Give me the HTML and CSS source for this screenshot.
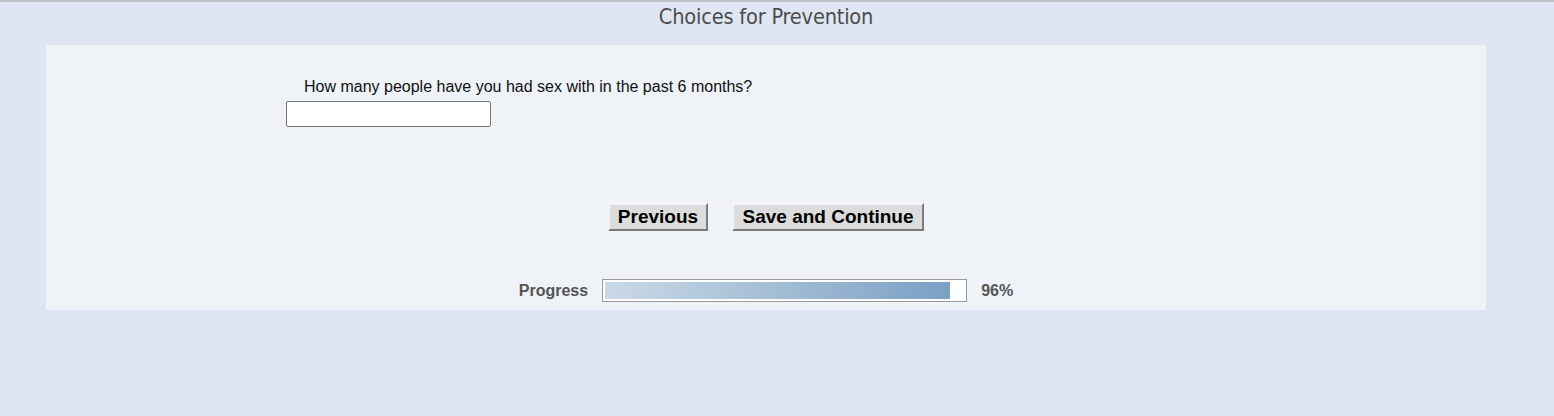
FILE: index.html
```html
<!DOCTYPE html>
<html lang="en">
<head>
	<meta charset="UTF-8">
	<title>Choices for Prevention</title>
	<link rel="stylesheet" href="styles.css">
</head>
<body>
	<div class="page">
		<h1 class="title">Choices for Prevention</h1>
		<div class="panel">
			<div class="question">
				<label for="partners">How many people have you had sex with in the past 6 months?</label>
				<input type="text" id="partners" class="answer" autocomplete="off">
			</div>
			<div class="buttons">
				<button type="button" class="btn">Previous</button>
				<button type="button" class="btn">Save and Continue</button>
			</div>
			<div class="progress">
				<span class="progress-label">Progress</span>
				<div class="bar"><div class="fill" style="width:96%"></div></div>
				<span class="progress-value">96%</span>
			</div>
		</div>
	</div>
</body>
</html>
```

FILE: styles.css
```css
html,body{margin:0;padding:0;}
body{background:#dfe6f3;border-top:2px solid #bfc1c6;font:16px "Liberation Sans",Arial,sans-serif;color:#111;}
.page{width:1440px;margin-left:46px;}
.title{margin:0;height:43px;padding-top:3px;box-sizing:border-box;text-align:center;font:normal 21.6px/24px "DejaVu Sans Condensed","DejaVu Sans",sans-serif;color:#4c4c4c;letter-spacing:-0.2px;}
.panel{background:#eff2f7;height:265px;box-sizing:border-box;padding-top:31px;}
.question{padding-left:240px;}
.question label{display:block;padding:2px 0 0 18px;line-height:18px;font-size:16px;color:#111;}
.answer{display:block;margin-top:5px;width:205px;height:26px;box-sizing:border-box;border:1px solid #767676;border-radius:2px;background:#fff;padding:0 4px;font:16px "Liberation Sans",Arial,sans-serif;}
.buttons{display:flex;justify-content:center;gap:24px;margin-top:76px;}
.btn{height:28px;padding:0 4px;font:bold 19px/22px "Liberation Sans",Arial,sans-serif;color:#000;background:#dcdcdc;border:2px solid;border-color:#f4f4f4 #7a7a7a #7a7a7a #f4f4f4;cursor:pointer;}
.btn:first-child{width:100px;}
.btn:last-child{width:192px;}
.progress{display:flex;justify-content:center;align-items:center;gap:14px;margin-top:48px;}
.progress-label,.progress-value{font-weight:bold;font-size:16px;color:#555;}
.bar{width:365px;height:23px;box-sizing:border-box;border:1px solid #9a9a9a;background:#fff;padding:2px;}
.fill{height:100%;background:linear-gradient(to right,#cbd9e6,#7aa0c4);}
```
